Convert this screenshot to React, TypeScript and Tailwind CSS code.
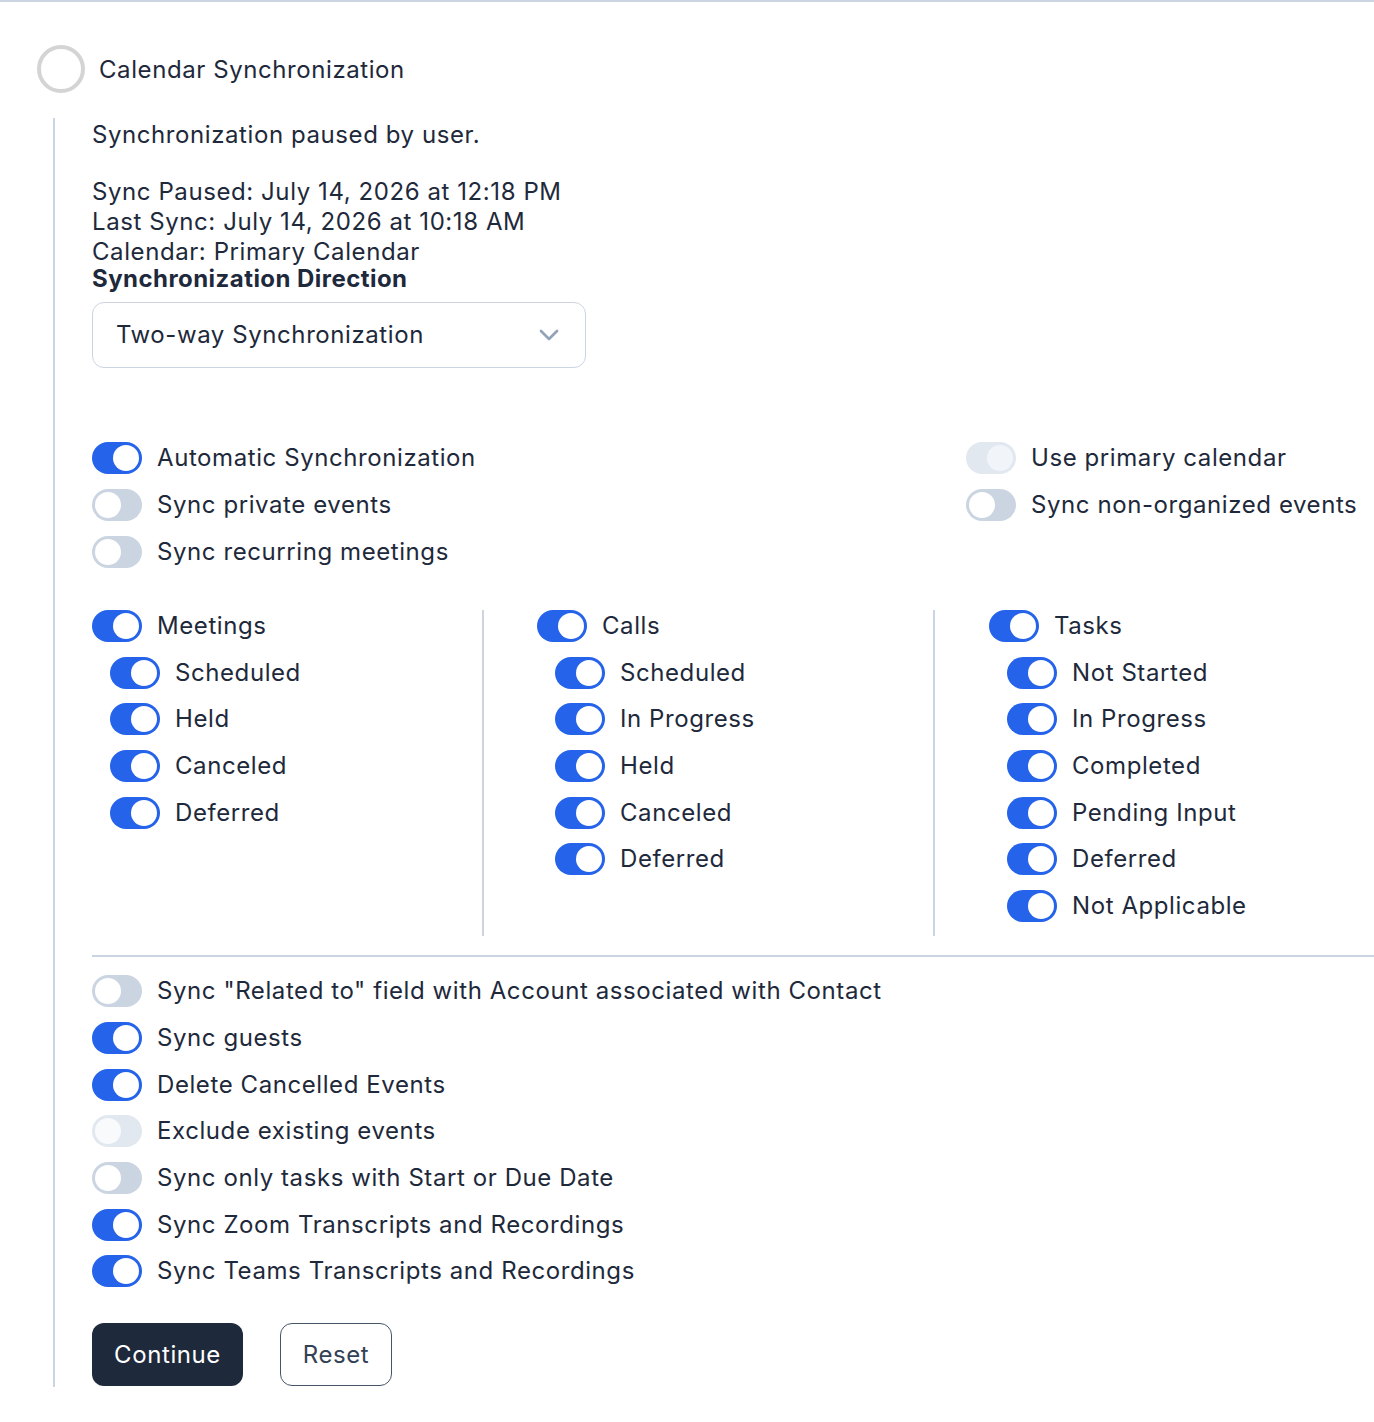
import { ChevronDown } from "lucide-react";

type ToggleProps = {
  on?: boolean;
  disabled?: boolean;
};

const Toggle = ({ on = false, disabled = false }: ToggleProps) => {
  let track = on ? "bg-[#2563eb]" : "bg-[#cbd5e1]";
  let knob = "bg-white";
  if (disabled) {
    track = "bg-[#e2e8f0]";
    knob = on ? "bg-[#f1f5f9]" : "bg-[#f8fafc]";
  }
  return (
    <span className={`relative inline-block shrink-0 w-[50px] h-[32px] rounded-full ${track}`}>
      <span
        className={`absolute top-[3px] w-[26px] h-[26px] rounded-full ${knob} ${on ? "left-[21px]" : "left-[3px]"}`}
      />
    </span>
  );
};

type Row = { label: string; on?: boolean; disabled?: boolean };

const ToggleRow = ({ label, on, disabled }: Row) => (
  <div className="flex items-center gap-[15px] h-8">
    <Toggle on={on} disabled={disabled} />
    <span className="text-[24px] leading-8 whitespace-nowrap">{label}</span>
  </div>
);

const groups = [
  { title: "Meetings", items: ["Scheduled", "Held", "Canceled", "Deferred"] },
  { title: "Calls", items: ["Scheduled", "In Progress", "Held", "Canceled", "Deferred"] },
  {
    title: "Tasks",
    items: ["Not Started", "In Progress", "Completed", "Pending Input", "Deferred", "Not Applicable"],
  },
];

const bottomRows: Row[] = [
  { label: 'Sync "Related to" field with Account associated with Contact' },
  { label: "Sync guests", on: true },
  { label: "Delete Cancelled Events", on: true },
  { label: "Exclude existing events", disabled: true },
  { label: "Sync only tasks with Start or Due Date" },
  { label: "Sync Zoom Transcripts and Recordings", on: true },
  { label: "Sync Teams Transcripts and Recordings", on: true },
];

const App = () => {
  return (
    <div className="min-h-screen bg-white font-['Inter',sans-serif] tracking-[0.58px] text-[#1e293b] border-t-2 border-[#cbd5e1] overflow-hidden">
      {/* Header */}
      <div className="flex items-center gap-[14px] pl-[37px] pt-[43px]">
        <span className="w-[48px] h-[48px] rounded-full border-[4px] border-[#d4d4d4]" />
        <h2 className="text-[24px] leading-8 mt-[2px]">Calendar Synchronization</h2>
      </div>

      <div className="ml-[53px] mt-[25px] border-l-2 border-[#cbd5e1] pl-[37px] pt-[2px] pb-px">
        <p className="text-[24px] leading-[30px]">Synchronization paused by user.</p>

        <div className="mt-[27px] text-[24px] leading-[30px]">
          <p>Sync Paused: July 14, 2026 at 12:18 PM</p>
          <p>Last Sync: July 14, 2026 at 10:18 AM</p>
          <p>Calendar: Primary Calendar</p>
        </div>
        <p className="text-[24px] leading-6 font-bold tracking-[0.45px]">Synchronization Direction</p>

        <div className="mt-[11px] w-[494px] h-[66px] rounded-xl border border-[#cbd5e1] flex items-center justify-between pl-[23px] pr-[20px]">
          <span className="text-[24px]">Two-way Synchronization</span>
          <ChevronDown size={32} strokeWidth={2} className="text-[#94a3b8]" />
        </div>

        {/* general toggles */}
        <div className="flex mt-[74px]">
          <div className="w-[874px] flex flex-col gap-[15px]">
            <ToggleRow label="Automatic Synchronization" on />
            <ToggleRow label="Sync private events" />
            <ToggleRow label="Sync recurring meetings" />
          </div>
          <div className="flex flex-col gap-[15px]">
            <ToggleRow label="Use primary calendar" on disabled />
            <ToggleRow label="Sync non-organized events" />
          </div>
        </div>

        {/* activity groups */}
        <div className="flex mt-[42px]">
          {groups.map((g, i) => (
            <div
              key={g.title}
              className={
                i === 0
                  ? "w-[390px] pb-[14px]"
                  : i === 1
                    ? "w-[451px] border-l-2 border-[#cbd5e1] pl-[53px] pb-[14px]"
                    : "flex-1 border-l-2 border-[#cbd5e1] pl-[54px] pb-[14px]"
              }
            >
              <div className="flex flex-col gap-[14.7px]">
                <ToggleRow label={g.title} on />
                {g.items.map((item) => (
                  <div key={item} className="pl-[18px]">
                    <ToggleRow label={item} on />
                  </div>
                ))}
              </div>
            </div>
          ))}
        </div>

        <div className="mt-[19px] border-t-2 border-[#cbd5e1]" />

        <div className="mt-[18px] flex flex-col gap-[14.7px]">
          {bottomRows.map((r) => (
            <ToggleRow key={r.label} {...r} />
          ))}
        </div>

        <div className="flex gap-[37px] mt-[36px]">
          <button className="h-[63px] w-[151px] rounded-xl bg-[#1e293b] text-white text-[24px]">
            Continue
          </button>
          <button className="h-[63px] w-[112px] rounded-xl border border-[#475569] text-[#334155] text-[24px]">
            Reset
          </button>
        </div>
      </div>
    </div>
  );
};

export default App;
